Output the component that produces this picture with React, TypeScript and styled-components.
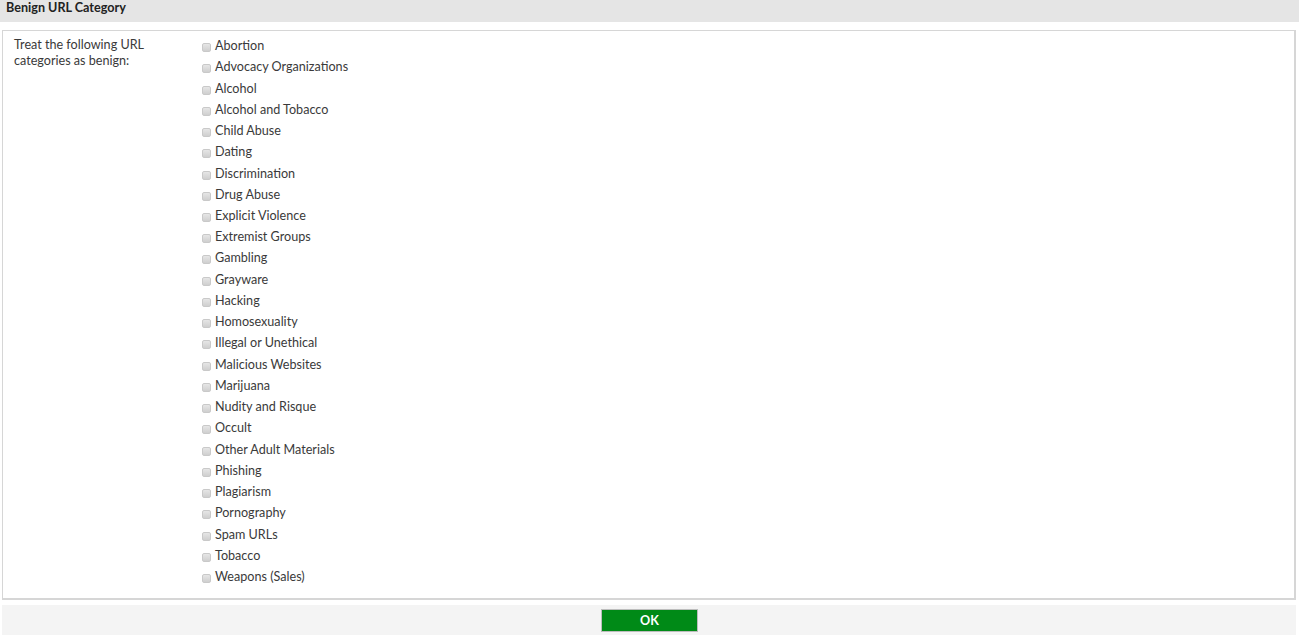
import React from "react";
import styled, { createGlobalStyle } from "styled-components";

const Global = createGlobalStyle`
  html, body { margin: 0; padding: 0; background: #ffffff; }
  body { font-family: Lato, "Open Sans", Arial, sans-serif; color: #333; }
`;

const categories = [
  "Abortion",
  "Advocacy Organizations",
  "Alcohol",
  "Alcohol and Tobacco",
  "Child Abuse",
  "Dating",
  "Discrimination",
  "Drug Abuse",
  "Explicit Violence",
  "Extremist Groups",
  "Gambling",
  "Grayware",
  "Hacking",
  "Homosexuality",
  "Illegal or Unethical",
  "Malicious Websites",
  "Marijuana",
  "Nudity and Risque",
  "Occult",
  "Other Adult Materials",
  "Phishing",
  "Plagiarism",
  "Pornography",
  "Spam URLs",
  "Tobacco",
  "Weapons (Sales)",
];

const Page = styled.div`
  width: 1302px;
  display: flex;
  flex-direction: column;
`;

const Header = styled.div`
  height: 22px;
  box-sizing: border-box;
  margin-right: 3px;
  background: #e5e5e5;
  padding: 0 0 0 6px;
  font-size: 12.6px;
  line-height: 16px;
  font-weight: 700;
  color: #222;
`;

const Box = styled.div`
  margin: 8px 6px 0 2px;
  height: 570px;
  box-sizing: border-box;
  border: 1px solid #d6d6d6;
  border-right-width: 2px;
  border-bottom-width: 2px;
  display: grid;
  grid-template-columns: 199px 1fr;
`;

const Label = styled.div`
  padding: 6px 0 0 11px;
  font-size: 12.6px;
  line-height: 16px;
  color: #3a3a3a;
  width: 140px;
`;

const List = styled.div`
  padding-top: 4px;
  display: flex;
  flex-direction: column;
`;

const Row = styled.label`
  height: 21.24px;
  display: flex;
  align-items: center;
  font-size: 12.6px;
  color: #3a3a3a;
  gap: 4px;
`;

const Check = styled.span`
  width: 9px;
  height: 9px;
  margin-top: 4px;
  box-sizing: border-box;
  border: 1px solid #c9c9c9;
  border-radius: 2px;
  background: linear-gradient(#e6e6e6, #cfcfcf);
  flex: none;
`;

const Footer = styled.div`
  margin: 5px 6px 0 2px;
  height: 30px;
  background: #f4f4f4;
  display: flex;
  justify-content: center;
  align-items: center;
`;

const Button = styled.button`
  width: 97px;
  height: 23px;
  box-sizing: border-box;
  margin-left: 1px;
  background: #008a17;
  border: 1px solid #bdbdbd;
  color: #fff;
  font-family: Lato, "Open Sans", Arial, sans-serif;
  font-size: 12.6px;
  font-weight: 700;
  padding: 0;
`;

export default function App() {
  return (
    <Page>
      <Global />
      <Header>Benign URL Category</Header>
      <Box>
        <Label>Treat the following URL categories as benign:</Label>
        <List>
          {categories.map((c) => (
            <Row key={c}>
              <Check />
              {c}
            </Row>
          ))}
        </List>
      </Box>
      <Footer>
        <Button>OK</Button>
      </Footer>
    </Page>
  );
}
